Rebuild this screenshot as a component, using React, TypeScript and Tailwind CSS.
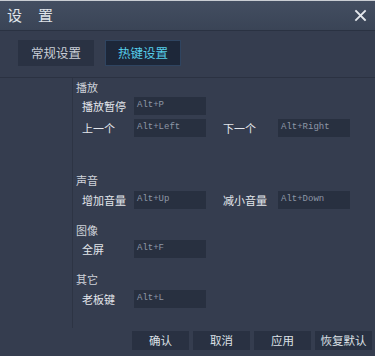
import React from "react";

const font = { fontFamily: '"Noto Sans CJK SC", "Noto Sans", sans-serif' };

function KeyBox({ value }: { value: string }) {
  return (
    <div className="w-[72px] h-[18px] bg-[#283040] flex items-center pl-[3px] text-[9px] text-[#8e97a6] font-['Liberation_Mono',monospace]">
      {value}
    </div>
  );
}

function Row({ label, value, wide }: { label: string; value: string; wide?: boolean }) {
  return (
    <div className="flex items-center h-[18px]">
      <span className={(wide ? "w-[61px]" : "w-[58px]") + " pl-[6px] text-[11px] text-[#e3e6eb] whitespace-nowrap"}>{label}</span>
      <KeyBox value={value} />
    </div>
  );
}

export default function App() {
  return (
    <div style={font} className="w-[375px] h-[356px] bg-[#353d4f] flex flex-col overflow-hidden select-none">
      <div className="h-[31px] shrink-0 border-t border-[#c9cdd3] bg-gradient-to-b from-[#434e61] to-[#3a4456] border-b border-b-[#2a3242] flex items-center justify-between pl-[7px] pr-[7px]">
        <span className="text-[15px] text-[#dfe3e9] tracking-[16px]">设置</span>
        <svg width="13" height="13" viewBox="0 0 13 13" className="mr-[1px]">
          <path d="M2 2 L11 11 M11 2 L2 11" stroke="#e4e7ec" strokeWidth="1.8" strokeLinecap="square" />
        </svg>
      </div>

      <div className="h-[46px] shrink-0 flex items-start gap-[11px] pl-[18px] pt-[9px]">
        <div className="w-[76px] h-[26px] bg-[#2a3243] flex items-center justify-center text-[12.5px] text-[#c9ced6]">常规设置</div>
        <div className="w-[76px] h-[26px] bg-[#1d2739] border border-[#2f4460] flex items-center justify-center text-[12.5px] text-[#56cde9]">热键设置</div>
      </div>

      <div className="flex border-t border-[#2b3242] h-[251px] shrink-0">
        <div className="w-[73px] border-r border-[#2d3444] shrink-0" />
        <div className="flex flex-col pl-[3px]">
          <div className="mt-[2px] h-[14px] leading-[14px] text-[11px] text-[#cfd3da]">播放</div>
          <div className="mt-[3px]"><Row label="播放暂停" value="Alt+P" /></div>
          <div className="mt-[4px] flex">
            <Row label="上一个" value="Alt+Left" />
            <div className="ml-[11px]"><Row label="下一个" value="Alt+Right" wide /></div>
          </div>
          <div className="mt-[36px] h-[14px] leading-[14px] text-[11px] text-[#cfd3da]">声音</div>
          <div className="mt-[4px] flex">
            <Row label="增加音量" value="Alt+Up" />
            <div className="ml-[11px]"><Row label="减小音量" value="Alt+Down" wide /></div>
          </div>
          <div className="mt-[14px] h-[14px] leading-[14px] text-[11px] text-[#cfd3da]">图像</div>
          <div className="mt-[3px]"><Row label="全屏" value="Alt+F" /></div>
          <div className="mt-[14px] h-[14px] leading-[14px] text-[11px] text-[#cfd3da]">其它</div>
          <div className="mt-[4px]"><Row label="老板键" value="Alt+L" /></div>
        </div>
      </div>

      <div className="flex gap-[4px] pl-[132px] mt-[3px]">
        {["确认", "取消", "应用", "恢复默认"].map((t) => (
          <div key={t} className="w-[57px] h-[19px] bg-[#293142] flex items-center justify-center text-[11.5px] text-[#dde1e7]">
            {t}
          </div>
        ))}
      </div>
    </div>
  );
}
